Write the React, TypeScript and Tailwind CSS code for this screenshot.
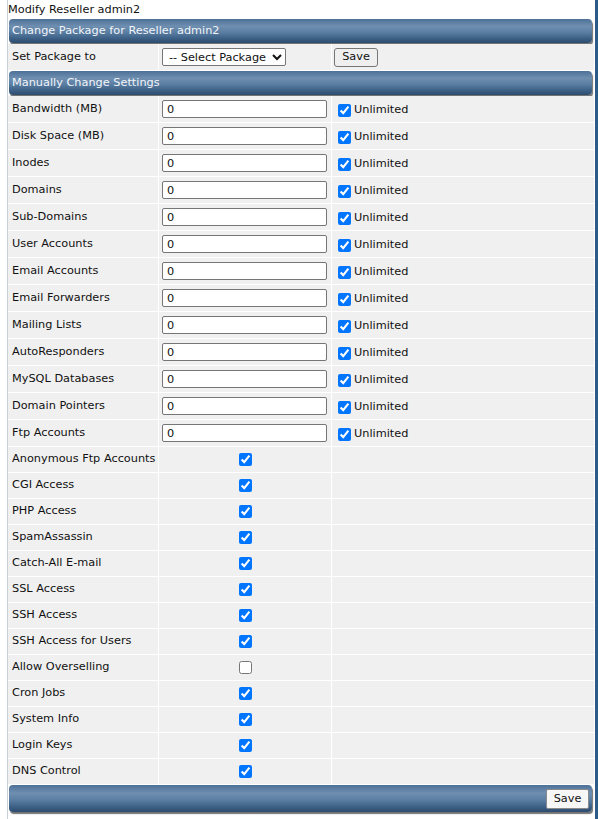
import React from "react";

const inputRows = [
  "Bandwidth (MB)",
  "Disk Space (MB)",
  "Inodes",
  "Domains",
  "Sub-Domains",
  "User Accounts",
  "Email Accounts",
  "Email Forwarders",
  "Mailing Lists",
  "AutoResponders",
  "MySQL Databases",
  "Domain Pointers",
  "Ftp Accounts",
];

const checkRows: [string, boolean][] = [
  ["Anonymous Ftp Accounts", true],
  ["CGI Access", true],
  ["PHP Access", true],
  ["SpamAssassin", true],
  ["Catch-All E-mail", true],
  ["SSL Access", true],
  ["SSH Access", true],
  ["SSH Access for Users", true],
  ["Allow Overselling", false],
  ["Cron Jobs", true],
  ["System Info", true],
  ["Login Keys", true],
  ["DNS Control", true],
];

function Bar({ children, className = "" }: { children?: React.ReactNode; className?: string }) {
  return (
    <div className={"pl-[1px] pr-[2px] " + className}>
      <div className="flex items-center rounded-[4px] bg-[linear-gradient(to_bottom,#4d7097_0%,#6f8fb0_30%,#5b7ea3_55%,#3e6187_80%,#2d4c6e_100%)] shadow-[1px_2px_1px_rgba(0,0,0,0.55)] text-[#f2f5f9] px-[3px] h-full">
        {children}
      </div>
    </div>
  );
}

export default function App() {
  return (
    <div
      className="flex w-[598px] h-[819px] bg-white text-[11.3px] text-[#111] overflow-hidden"
      style={{ fontFamily: '"DejaVu Sans", Verdana, sans-serif' }}
    >
      <div className="w-[7px] shrink-0" />
      <div className="w-[1px] shrink-0 bg-[#c9d0d7]" />
      <div className="w-[586px] shrink-0 flex flex-col">
        <div className="h-[19px] leading-[15px] pt-[2px] pl-[0px]">Modify Reseller admin2</div>
        <div className="flex flex-col gap-[1px]">
          <Bar className="h-[24px]">Change Package for Reseller admin2</Bar>
          <div className="grid grid-cols-[150px_172px_1fr] gap-x-[1px] h-[26px] bg-white">
            <div className="bg-[#f0f0f0] flex items-center pl-[4px]">Set Package to</div>
            <div className="bg-[#f0f0f0] flex items-center pl-[3px]">
              <select className="h-[18px] w-[124px] border border-[#767676] rounded-[2px] bg-white text-[11.3px] pl-[2px] pr-[0px]">
                <option>-- Select Package</option>
              </select>
            </div>
            <div className="bg-[#f0f0f0] flex items-center pl-[2px]">
              <button className="h-[19px] w-[44px] border border-[#767676] rounded-[3px] bg-[#efefef] text-[11.3px] leading-none">
                Save
              </button>
            </div>
          </div>
          <Bar className="h-[24px]">Manually Change Settings</Bar>
          {inputRows.map((label) => (
            <div key={label} className="grid grid-cols-[150px_172px_1fr] gap-x-[1px] h-[26px] bg-white">
              <div className="bg-[#f0f0f0] flex items-center pl-[4px]">{label}</div>
              <div className="bg-[#f0f0f0] flex items-center pl-[3px]">
                <input
                  type="text"
                  defaultValue="0"
                  className="w-[165px] h-[18px] border border-[#767676] rounded-[2px] bg-white px-[4px] text-[11.3px] leading-none"
                />
              </div>
              <div className="bg-[#f0f0f0] flex items-center pl-[2px] pt-[2px]">
                <input type="checkbox" defaultChecked className="m-[3px] mr-[3px] ml-[4px] w-[13px] h-[13px]" />
                <span>Unlimited</span>
              </div>
            </div>
          ))}
          {checkRows.map(([label, checked]) => (
            <div key={label} className="grid grid-cols-[150px_172px_1fr] gap-x-[1px] h-[25px] bg-white">
              <div className="bg-[#f0f0f0] flex items-center pl-[4px] whitespace-nowrap">{label}</div>
              <div className="bg-[#f0f0f0] flex items-center justify-center">
                <input type="checkbox" defaultChecked={checked} className="w-[13px] h-[13px]" />
              </div>
              <div className="bg-[#f0f0f0]" />
            </div>
          ))}
          <Bar className="h-[27px]">
            <div className="flex-1" />
            <button className="h-[20px] w-[43px] border border-[#8a8a8a] rounded-[2px] bg-[#f7f7f7] text-[11.3px] text-[#111] leading-none">
              Save
            </button>
          </Bar>
        </div>
      </div>
      <div className="w-[1px] shrink-0" />
      <div className="flex-1 bg-[#2e5a88]" />
    </div>
  );
}
